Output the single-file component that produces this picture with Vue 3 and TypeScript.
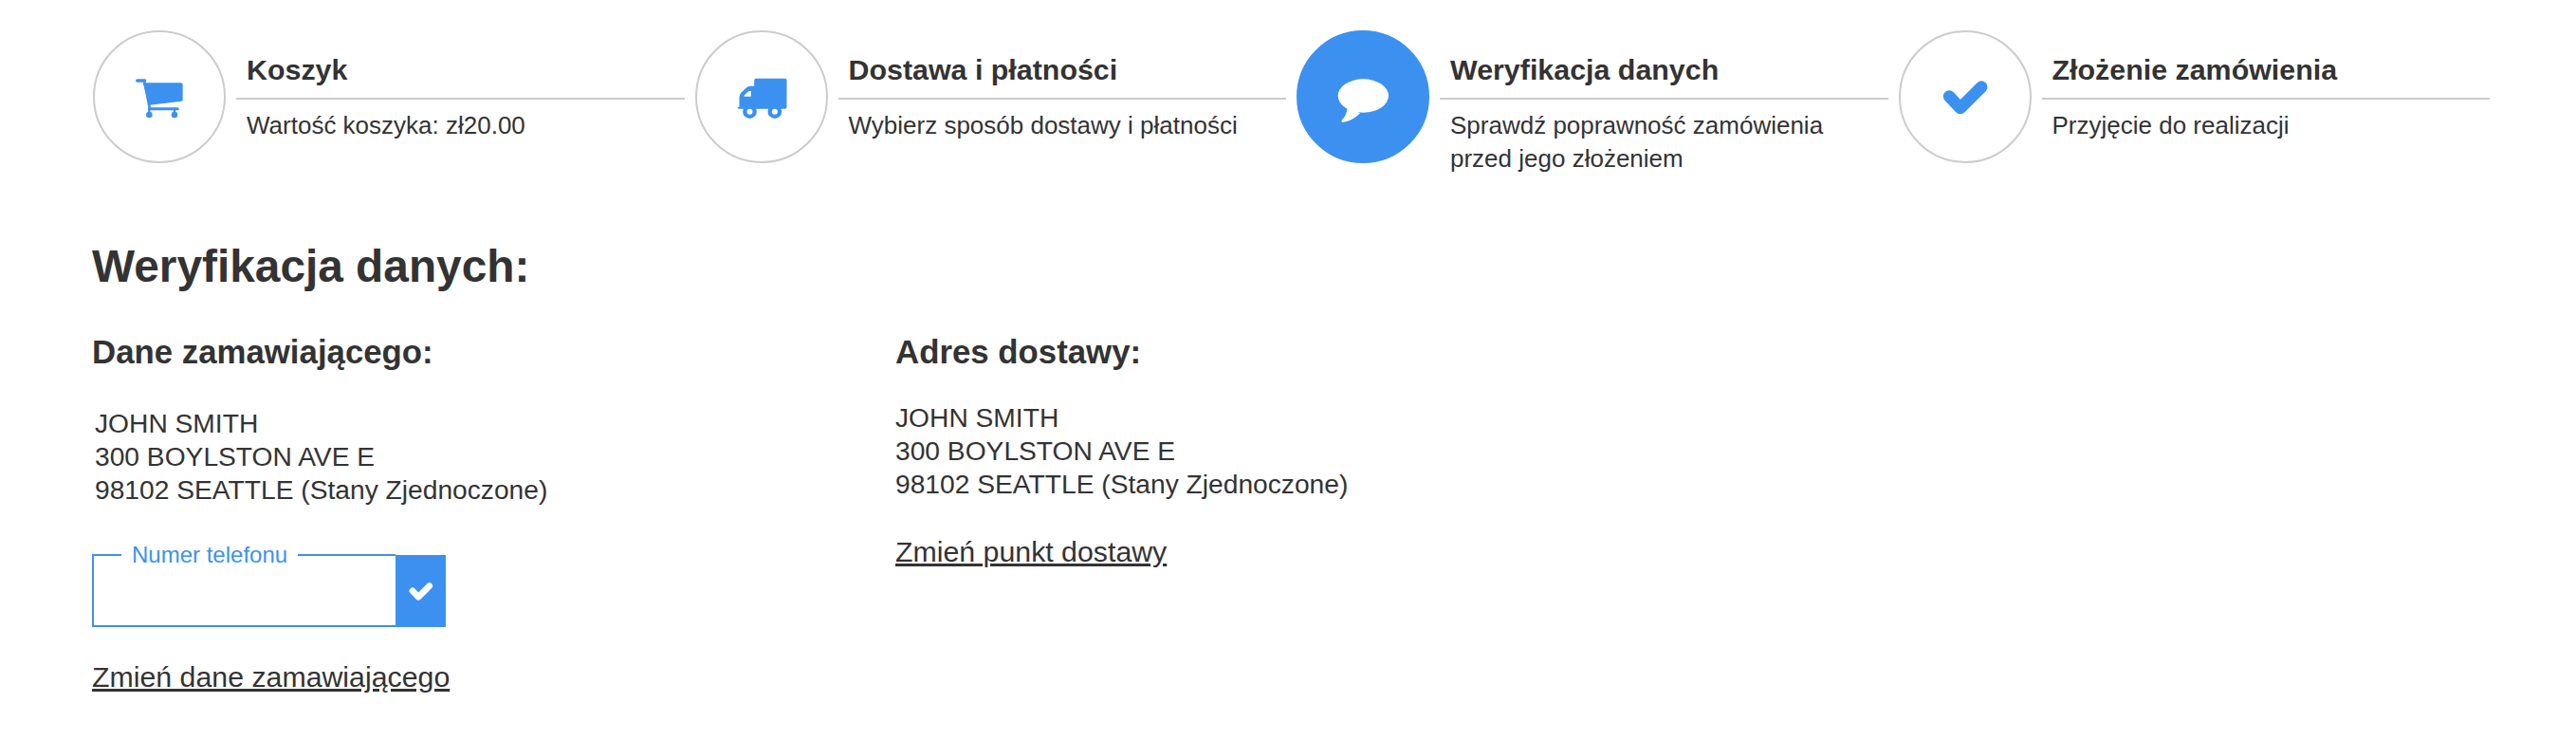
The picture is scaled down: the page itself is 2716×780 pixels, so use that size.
<script setup lang="ts">
interface Step {
  title: string;
  lines: string[];
  icon: "cart" | "truck" | "comment" | "check";
  vb: string;
  active?: boolean;
}
const steps: Step[] = [
  { title: "Koszyk", lines: ["Wartość koszyka: zł20.00"], icon: "cart", vb: "-6 0 240 192" },
  { title: "Dostawa i płatności", lines: ["Wybierz sposób dostawy i płatności"], icon: "truck", vb: "-4.5 0 240 192" },
  { title: "Weryfikacja danych", lines: ["Sprawdź poprawność zamówienia", "przed jego złożeniem"], icon: "comment", vb: "-3 0 240 192", active: true },
  { title: "Złożenie zamówienia", lines: ["Przyjęcie do realizacji"], icon: "check", vb: "-1.5 0 240 192" },
];
const address = ["JOHN SMITH", "300 BOYLSTON AVE E", "98102 SEATTLE (Stany Zjednoczone)"];
</script>

<template>
  <div class="page">
    <div class="steps">
      <div v-for="s in steps" :key="s.title" class="step" :class="{ active: s.active }">
        <div class="circle">
          <svg :viewBox="s.vb" width="80" height="64" class="icon">
            <template v-if="s.icon === 'cart'">
              <path d="M62 52H182Q188 52 188 58V106Q188 110 184 110L84 122Z" />
              <path class="line" stroke-width="8" d="M66 46L84 134" />
              <path class="line" stroke-width="10" d="M44 45H68" />
              <path class="line" stroke-width="9" d="M82 134H172" />
              <path class="line" stroke-width="7" d="M82 134V150M162 134V150" />
              <circle cx="82" cy="153" r="10" />
              <circle cx="162" cy="153" r="10" />
            </template>
            <template v-else-if="s.icon === 'truck'">
              <path fill-rule="evenodd" d="M92 44Q92 38 98 38H189Q195 38 195 44V128Q195 134 189 134H44Q38 134 40 129L45 128V98Q45 90 50 84L66 68Q72 62 80 62H92ZM60 95V92L72 80Q74 78 78 78H82V95Z" />
              <circle cx="78" cy="143" r="22" />
              <circle cx="157" cy="143" r="22" />
              <circle class="hole" cx="78" cy="143" r="9" />
              <circle class="hole" cx="157" cy="143" r="9" />
            </template>
            <template v-else-if="s.icon === 'comment'">
              <ellipse cx="118" cy="93" rx="80" ry="53" />
              <path d="M68 130Q66 155 50 170Q47 177 56 176Q85 172 108 148Z" />
            </template>
            <path v-else class="line" stroke-width="38" stroke-linejoin="round" d="M68 95L103 132L170 65" />
          </svg>
        </div>
        <div class="info">
          <div class="title">{{ s.title }}</div>
          <div class="desc">
            <div v-for="l in s.lines" :key="l">{{ l }}</div>
          </div>
        </div>
      </div>
    </div>
    <h1 class="heading">Weryfikacja danych:</h1>
    <div class="cols">
      <div class="col-left">
        <h2 class="sub">Dane zamawiającego:</h2>
        <div class="addr addr-left">
          <div v-for="l in address" :key="l">{{ l }}</div>
        </div>
        <div class="field">
          <fieldset class="box">
            <legend class="legend">Numer telefonu</legend>
          </fieldset>
          <div class="ok">
            <svg viewBox="0 0 240 192" width="42" height="34" class="ok-icon">
              <path stroke-width="38" stroke-linecap="round" stroke-linejoin="round" fill="none" d="M68 95L103 132L170 65" />
            </svg>
          </div>
        </div>
        <a class="link link-left">Zmień dane zamawiającego</a>
      </div>
      <div class="col-right">
        <h2 class="sub">Adres dostawy:</h2>
        <div class="addr addr-right">
          <div v-for="l in address" :key="l">{{ l }}</div>
        </div>
        <a class="link link-right">Zmień punkt dostawy</a>
      </div>
    </div>
  </div>
</template>

<style>
html, body { margin: 0; background: #fff; }
</style>

<style scoped>
.page {
  width: 2716px;
  height: 780px;
  box-sizing: border-box;
  padding: 32px 90px 0 98px;
  font-family: "Liberation Sans", Arial, sans-serif;
  color: #333;
  overflow: hidden;
}
.steps { display: flex; gap: 11px; }
.step { display: flex; flex: 0 0 623.5px; height: 140px; }
.circle {
  flex: 0 0 140px;
  height: 140px;
  box-sizing: border-box;
  border: 2px solid #ccc;
  border-radius: 50%;
  display: flex;
  align-items: center;
  justify-content: center;
}
.icon { fill: #3c91f0; stroke: none; }
.line { fill: none; stroke: #3c91f0; stroke-linecap: round; }
.hole { fill: #fff; }
.active .circle { background: #3c91f0; border-color: #3c91f0; }
.active .icon { fill: #fff; }
.info { flex: 1; margin-left: 11px; }
.title {
  height: 73px;
  box-sizing: border-box;
  padding: 23px 0 0 11px;
  font-size: 30.4px;
  line-height: 36px;
  font-weight: 700;
  border-bottom: 2px solid #ccc;
}
.desc { padding: 10px 0 0 11px; font-size: 26px; line-height: 35px; }
.heading { margin: 79px 0 0 -1px; font-size: 47.8px; line-height: 60px; font-weight: 700; }
.cols { display: flex; margin-top: 40px; }
.col-left { flex: 0 0 846px; margin-left: -1px; margin-right: 1px; }
.sub { margin: 0; font-size: 34.8px; line-height: 40px; font-weight: 700; }
.addr { font-size: 28.2px; line-height: 35px; }
.addr-left { margin: 38px 0 0 3px; }
.addr-right { margin: 32px 0 0; }
.field { display: flex; width: 373px; height: 87px; margin-top: 40px; }
.box {
  flex: 1;
  margin: 0;
  min-width: 0;
  padding: 0 0 0 29px;
  border: 2px solid #3c91f0;
  border-right: 0;
  height: 87px;
  box-sizing: border-box;
}
.legend { padding: 0 11px; font-size: 24px; line-height: 22px; color: #3c91f0; }
.ok {
  flex: 0 0 53px;
  height: 76px;
  margin-top: 11px;
  background: #3c91f0;
  display: flex;
  align-items: center;
  justify-content: center;
}
.ok-icon { stroke: #fff; }
.link { display: block; width: max-content; font-size: 30.3px; line-height: 35px; text-decoration: underline; }
.link-left { margin-top: 35px; }
.link-right { margin-top: 36px; }
</style>
